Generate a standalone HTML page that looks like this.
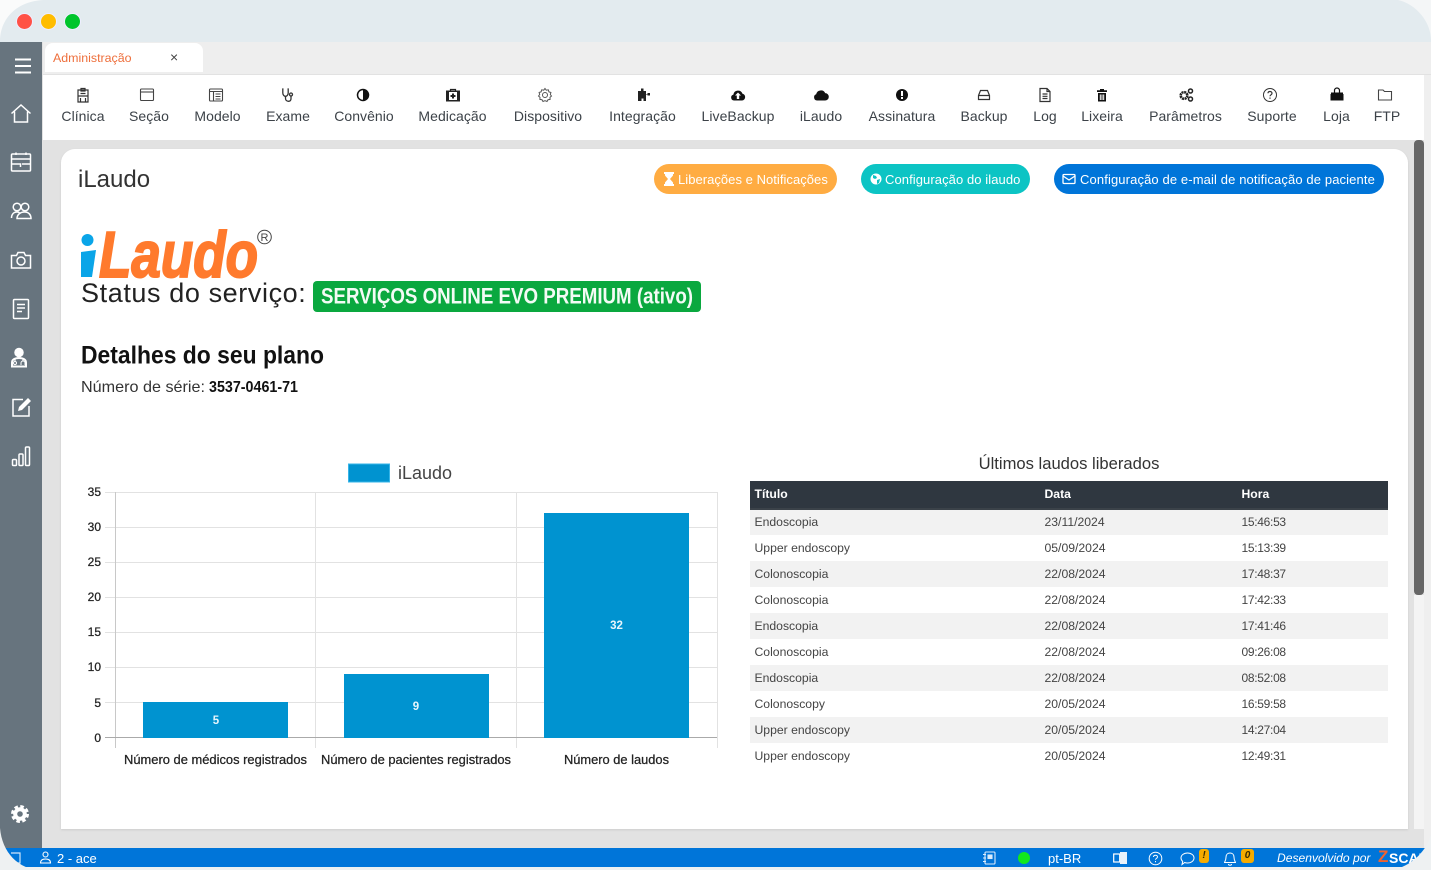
<!DOCTYPE html>
<html lang="pt-BR"><head><meta charset="utf-8"><title>iLaudo</title>
<style>
*{box-sizing:border-box}
html,body{margin:0;padding:0;width:1431px;height:870px;overflow:hidden;background:#eef1f2;font-family:"Liberation Sans",sans-serif}
.a{position:absolute}
.t{position:absolute;white-space:nowrap}
.tb{position:absolute;top:87px;width:100px;text-align:center;font-size:14px;color:#3c4248;letter-spacing:.05px}
.tb svg{display:block;margin:0 auto 3px;width:16px;height:16px}
.tb span{display:block;line-height:20px}
.side svg{position:absolute;left:10px;width:22px;height:22px;fill:none;stroke:#fff;stroke-width:1.5}
.btn{position:absolute;top:164px;height:30px;border-radius:15px;color:#fff;font-size:13px;line-height:31px;white-space:nowrap;padding-left:9px}
.btn svg{position:absolute;top:8px;width:14px;height:14px}
.btn span{position:absolute;top:0}
table{position:absolute;left:750px;top:481px;width:638px;border-collapse:collapse;font-size:12.2px;color:#444;table-layout:fixed}
th{height:28px;background:#2f3740;color:#fff;text-align:left;padding:0 0 2px 4.5px;font-size:12.2px;border-bottom:2px solid #3b4249}
td{height:26px;padding:0 0 1px 4.5px}
td:nth-child(3){font-size:12px;letter-spacing:-.3px}
tr:nth-child(odd) td{background:#f2f2f2}
</style></head><body>
<div class="a" style="left:0;top:0;width:1431px;height:42px;background:#e3ebef"></div>
<div class="a" style="left:17px;top:14px;width:15px;height:15px;border-radius:50%;background:#ff5146;box-shadow:0 0 0 1px #eef"></div>
<div class="a" style="left:41px;top:14px;width:15px;height:15px;border-radius:50%;background:#ffbd00;box-shadow:0 0 0 1px #eef"></div>
<div class="a" style="left:65px;top:14px;width:15px;height:15px;border-radius:50%;background:#00c52c;box-shadow:0 0 0 1px #eef"></div>

<div class="a" style="left:42px;top:42px;width:1389px;height:806px;background:#e2e2e2"></div>
<div class="a" style="left:43px;top:42px;width:1388px;height:32px;background:#eeeeee"></div>
<div class="a" style="left:45px;top:43px;width:158px;height:29px;background:#fff;border-radius:8px 8px 0 0"></div>
<div class="t" style="left:53px;top:50px;font-size:12.4px;color:#ee6f3c;line-height:16px">Administração</div>
<div class="t" style="left:170px;top:50px;font-size:14px;color:#444;line-height:15px">×</div>

<div class="a" style="left:43px;top:75px;width:1381px;height:65px;background:#fff"></div>
<div class="a" style="left:1424px;top:75px;width:7px;height:773px;background:#efefef"></div>

<div class="tb" style="left:33px"><svg viewBox="0 0 16 16" fill="none" stroke="#333" stroke-width="1.2"><path d="M3 3h10v12H3zM6 1.500h4V4H6zM3 9h10M5.500 11v4M10.500 11v4M5.500 6.500h5"/></svg><span>Clínica</span></div>
<div class="tb" style="left:97px"><svg viewBox="0 0 16 16" fill="none" stroke="#444" stroke-width="1.100"><rect x="1.500" y="2" width="13" height="11.500" rx="1"/><path d="M1.500 5h13"/></svg><span style="margin-left:4px">Seção</span></div>
<div class="tb" style="left:165.500px"><svg viewBox="0 0 16 16" fill="none" stroke="#444" stroke-width="1.100"><rect x="1.500" y="2" width="13" height="12" rx="1"/><path d="M1.500 4.500h13M5.500 4.500V14M7.500 7h5M7.500 9.500h5M7.500 12h5"/></svg><span style="margin-left:4px">Modelo</span></div>
<div class="tb" style="left:238px"><svg viewBox="0 0 16 16" fill="none" stroke="#333" stroke-width="1.300"><path d="M3.500 2H2.800v4c0 2 1.500 3.300 2.700 3.300S8.200 8 8.200 6V2h-.7M5.500 9.300v2c0 2 1.500 3 3 3s2.500-1 2.500-2.500V9"/><circle cx="11" cy="7.500" r="1.500"/></svg><span>Exame</span></div>
<div class="tb" style="left:313px"><svg viewBox="0 0 16 16"><circle cx="8" cy="8" r="5.500" fill="#fff" stroke="#111" stroke-width="1.500"/><path d="M8 2.500a5.500 5.500 0 0 1 0 11z" fill="#111"/></svg><span style="margin-left:2px">Convênio</span></div>
<div class="tb" style="left:402.500px"><svg viewBox="0 0 16 16"><path d="M1.500 4h13v10h-13z" fill="#222" stroke="#222"/><path d="M5.500 4V2.500h5V4" fill="none" stroke="#222" stroke-width="1.200"/><rect x="4" y="5" width="8" height="8" fill="#fff"/><path d="M7 6.500h2V8h1.500v2H9v1.500H7V10H5.500V8H7z" fill="#222"/></svg><span>Medicação</span></div>
<div class="tb" style="left:495px"><svg viewBox="0 0 16 16" fill="none" stroke="#555" stroke-width="1"><path d="M8 1.500l1.300 1.700 2-.4.600 2 2 .7-.6 2 1.200 1.500-1.500 1.300.1 2.100-2.100.3-1 1.800L8 13.700l-2 .8-1-1.800-2.100-.3.100-2.100L1.500 9l1.200-1.500-.6-2 2-.7.600-2 2 .4z"/><circle cx="8" cy="8" r="2.500"/></svg><span style="margin-left:6px">Dispositivo</span></div>
<div class="tb" style="left:592.500px"><svg viewBox="0 0 16 16" fill="#222"><path d="M6 1.500h2.500V4H11v3h1.500V6H15v2.500h-2.500v-1H11V14H8.500v-2.500H6.500V14H3V4h3z"/></svg><span>Integração</span></div>
<div class="tb" style="left:688px"><svg viewBox="0 0 16 16"><path d="M4 13.500a3 3 0 0 1-.6-5.900 4.700 4.700 0 0 1 9-1A3.500 3.500 0 0 1 12 13.500z" fill="#111"/><path d="M8 5.500l3 3H9.200V12H6.800V8.500H5z" fill="#fff"/></svg><span>LiveBackup</span></div>
<div class="tb" style="left:771px"><svg viewBox="0 0 16 16"><path d="M4 13.500a3.200 3.200 0 0 1-.8-6.200 4.800 4.800 0 0 1 9-1.200A3.700 3.700 0 0 1 12 13.500z" fill="#111"/></svg><span>iLaudo</span></div>
<div class="tb" style="left:852px"><svg viewBox="0 0 16 16"><circle cx="8" cy="8" r="6" fill="#111"/><rect x="7" y="4" width="2" height="5" fill="#fff"/><rect x="7" y="10" width="2" height="2" fill="#fff"/></svg><span>Assinatura</span></div>
<div class="tb" style="left:934px"><svg viewBox="0 0 16 16" fill="none" stroke="#333" stroke-width="1.200"><path d="M2.500 8.500L4.500 3.500h7l2 5v4h-11zM2.500 8.500h11"/></svg><span>Backup</span></div>
<div class="tb" style="left:995px"><svg viewBox="0 0 16 16" fill="none" stroke="#333" stroke-width="1.200"><path d="M3 1.500h7l3 3v10H3zM10 1.500v3h3M5.500 7h5M5.500 9.300h5M5.500 11.500h5"/></svg><span>Log</span></div>
<div class="tb" style="left:1052px"><svg viewBox="0 0 16 16"><path d="M6 2h4v1.300h3V5H3V3.300h3z" fill="#111"/><path d="M4 6h8v8.500H4z" fill="#111"/><path d="M6.300 7.500V13M8 7.500V13M9.700 7.500V13" stroke="#fff"/></svg><span>Lixeira</span></div>
<div class="tb" style="left:1135.500px"><svg viewBox="0 0 16 16"><circle cx="6" cy="8.500" r="3.300" fill="none" stroke="#222" stroke-width="2.600" stroke-dasharray="2 .6"/><circle cx="12.500" cy="4" r="2" fill="none" stroke="#222" stroke-width="1.500"/><circle cx="12.500" cy="12" r="2" fill="none" stroke="#222" stroke-width="1.500"/></svg><span>Parâmetros</span></div>
<div class="tb" style="left:1220px"><svg viewBox="0 0 16 16" fill="none" stroke="#333" stroke-width="1"><circle cx="8" cy="8" r="6.500"/><path d="M6 6.300C6 5 7 4.500 8 4.500s2 .6 2 1.800c0 1.500-2 1.500-2 3" stroke-width="1.200"/><path d="M8 10.500v1.300" stroke-width="1.200"/></svg><span style="margin-left:4px">Suporte</span></div>
<div class="tb" style="left:1286.500px"><svg viewBox="0 0 16 16"><path d="M5.500 6V3.500a2.500 2.500 0 0 1 5 0V6" fill="none" stroke="#111" stroke-width="1.200"/><path d="M1.500 7h13v6.500h-13z" fill="#111"/><path d="M2 5.500h12v2H2z" fill="#111"/></svg><span>Loja</span></div>
<div class="tb" style="left:1335px"><svg viewBox="0 0 16 16" fill="none" stroke="#444" stroke-width="1.100"><path d="M1.500 3h4.500l1.500 1.500h7V13h-13z"/></svg><span style="margin-left:4px">FTP</span></div>

<div class="a" style="left:61px;top:149px;width:1347px;height:680px;background:#fff;border-radius:14px 14px 0 0;box-shadow:0 1px 2px #ccc"></div>
<div class="a" style="left:1414px;top:140px;width:10px;height:455px;background:#666;border-radius:4px"></div>
<div class="a" style="left:1414px;top:595px;width:10px;height:234px;background:#f4f4f4"></div>

<div class="t" style="left:78px;top:166px;font-size:24px;line-height:28px;color:#333">iLaudo</div>

<div class="btn" style="left:654px;width:183px;background:#ffac42"><svg style="left:8px" viewBox="0 0 14 14" fill="#fff"><path d="M2 0h10v2h-1v1.500L8 7l3 3.500V12h1v2H2v-2h1v-1.500L6 7 3 3.500V2H2z"/></svg><span style="left:24px;letter-spacing:.04px">Liberações e Notificações</span></div>
<div class="btn" style="left:861px;width:169px;background:#0cc4c4"><svg style="left:8px" viewBox="0 0 14 14"><circle cx="7" cy="7" r="5.500" fill="#fff"/><path d="M4 3l3 1 1 2-2 1-2-1zM8 8l3-1-1 4-2 1z" fill="#0cc4c4"/></svg><span style="left:24px;letter-spacing:.08px">Configuração do ilaudo</span></div>
<div class="btn" style="left:1054px;width:330px;background:#0075d9"><svg style="left:8px" viewBox="0 0 14 14" fill="none" stroke="#fff" stroke-width="1.300"><rect x="1" y="2.500" width="12" height="9" rx="1"/><path d="M1 4l6 4 6-4"/></svg><span style="left:26px;letter-spacing:.12px">Configuração de e-mail de notificação de paciente</span></div>

<svg class="a" style="left:75px;top:222px" width="205" height="62" viewBox="0 0 205 62">
<circle cx="12.500" cy="18" r="6" fill="#0aa5e8"/>
<path d="M6 30l15-2-4 27H6z" fill="#0aa5e8"/>
<text x="24" y="55" font-family="'Liberation Sans',sans-serif" font-weight="700" font-style="italic" font-size="65" fill="#ff7a2d" stroke="#ff7a2d" stroke-width="2" textLength="159" lengthAdjust="spacingAndGlyphs">Laudo</text>
<circle cx="189.500" cy="15" r="6.800" fill="none" stroke="#444" stroke-width="1"/>
<text x="189.500" y="19" text-anchor="middle" font-family="'Liberation Sans',sans-serif" font-size="11" fill="#444">R</text>
</svg>

<div class="t" style="left:81px;top:277px;font-size:27px;line-height:32px;color:#222;letter-spacing:.6px">Status do serviço:</div>
<div class="a" style="left:313px;top:281px;width:388px;height:31px;background:#0aa83f;border-radius:4px"></div>
<svg class="a" style="left:313px;top:281px" width="388" height="31"><text x="8" y="22.500" font-family="'Liberation Sans',sans-serif" font-weight="700" font-size="22" fill="#f3fbf5" textLength="372" lengthAdjust="spacingAndGlyphs">SERVIÇOS ONLINE EVO PREMIUM (ativo)</text></svg>

<svg class="a" style="left:81px;top:340px" width="640" height="60">
<text x="0" y="23.500" font-family="'Liberation Sans',sans-serif" font-weight="700" font-size="25" fill="#111" textLength="243" lengthAdjust="spacingAndGlyphs">Detalhes do seu plano</text>
<text x="0" y="52" font-family="'Liberation Sans',sans-serif" font-size="16" fill="#333" textLength="124" lengthAdjust="spacingAndGlyphs">Número de série:</text>
<text x="128" y="52" font-family="'Liberation Sans',sans-serif" font-weight="700" font-size="16" fill="#111" textLength="89" lengthAdjust="spacingAndGlyphs">3537-0461-71</text>
</svg>

<svg class="a" style="left:75px;top:455px" width="660" height="325" viewBox="75 455 660 325" font-family="'Liberation Sans',sans-serif">
<rect x="348.500" y="464" width="41" height="18" fill="#0093d0" stroke="#36b4e8"/>
<text x="398" y="479" font-size="18" fill="#444" textLength="54" lengthAdjust="spacingAndGlyphs">iLaudo</text>
<g stroke="#e2e2e2" stroke-width="1">
<path d="M105 492.500H717M105 527.500H717M105 562.500H717M105 597.500H717M105 632.500H717M105 667.500H717M105 702.500H717"/>
<path d="M315.500 492V748M516.500 492V748M717.500 492V748"/>
</g>
<path d="M115.500 492V748" stroke="#c8c8c8"/>
<path d="M105 737.500H717" stroke="#aaa"/>
<rect x="143" y="702" width="145" height="36" fill="#0093d0"/>
<rect x="344" y="674" width="145" height="64" fill="#0093d0"/>
<rect x="544" y="513" width="145" height="225" fill="#0093d0"/>
<g font-size="11.500" font-weight="700" fill="#e8f6fc" text-anchor="middle">
<text x="216" y="724">5</text><text x="416" y="710">9</text><text x="616.500" y="629">32</text>
</g>
<g font-size="12" fill="#222" stroke="#222" stroke-width=".25" text-anchor="end">
<text x="101" y="496">35</text><text x="101" y="531">30</text><text x="101" y="566">25</text><text x="101" y="601">20</text><text x="101" y="636">15</text><text x="101" y="671">10</text><text x="101" y="707">5</text><text x="101" y="742">0</text>
</g>
<g font-size="13" fill="#222" stroke="#222" stroke-width=".25">
<text x="124" y="764" textLength="183" lengthAdjust="spacingAndGlyphs">Número de médicos registrados</text>
<text x="321" y="764" textLength="190" lengthAdjust="spacingAndGlyphs">Número de pacientes registrados</text>
<text x="564" y="764" textLength="105" lengthAdjust="spacingAndGlyphs">Número de laudos</text>
</g>
</svg>

<div class="t" style="left:750px;width:638px;text-align:center;top:454px;font-size:16.600px;line-height:19px;color:#333">Últimos laudos liberados</div>
<table><colgroup><col style="width:290px"><col style="width:197px"><col></colgroup>
<thead><tr><th>Título</th><th>Data</th><th>Hora</th></tr></thead>
<tbody>
<tr><td>Endoscopia</td><td>23/11/2024</td><td>15:46:53</td></tr>
<tr><td>Upper endoscopy</td><td>05/09/2024</td><td>15:13:39</td></tr>
<tr><td>Colonoscopia</td><td>22/08/2024</td><td>17:48:37</td></tr>
<tr><td>Colonoscopia</td><td>22/08/2024</td><td>17:42:33</td></tr>
<tr><td>Endoscopia</td><td>22/08/2024</td><td>17:41:46</td></tr>
<tr><td>Colonoscopia</td><td>22/08/2024</td><td>09:26:08</td></tr>
<tr><td>Endoscopia</td><td>22/08/2024</td><td>08:52:08</td></tr>
<tr><td>Colonoscopy</td><td>20/05/2024</td><td>16:59:58</td></tr>
<tr><td>Upper endoscopy</td><td>20/05/2024</td><td>14:27:04</td></tr>
<tr><td>Upper endoscopy</td><td>20/05/2024</td><td>12:49:31</td></tr>
</tbody></table>

<div class="a side" style="left:0;top:42px;width:42px;height:806px;background:#67747e">
<svg style="top:13px;left:12px" viewBox="0 0 22 22"><path d="M3 4.500h16M3 11h16M3 17.500h16" stroke-width="2"/></svg>
<svg style="top:60px" viewBox="0 0 22 22"><path d="M1.500 11.500L11 3l9.500 8.500M4.500 9.500V20h13V9.500"/></svg>
<svg style="top:109px" viewBox="0 0 22 22"><rect x="1.500" y="3" width="19" height="17" rx="1"/><path d="M1.500 8h19M6 1.500V4M16 1.500V4M1.500 13h9v3M12 13h8.500"/></svg>
<svg style="top:158px" viewBox="0 0 22 22"><circle cx="7" cy="7" r="3.800"/><circle cx="15" cy="7" r="3.800"/><path d="M1.500 18c0-3.500 2-6 5.500-6 1 0 2 .3 2.500.7M7 18.500c0-3.500 3-6.500 7.500-6.500s6.500 3 6.500 6.500z"/></svg>
<svg style="top:207px" viewBox="0 0 22 22"><path d="M1.500 6.500h5L8 3.500h6l1.500 3h5V19h-19z"/><circle cx="11" cy="12" r="4"/></svg>
<svg style="top:256px" viewBox="0 0 22 22"><rect x="3.500" y="1.500" width="15" height="19" rx="1"/><path d="M7 6.500h8M7 10h8M7 13.500h5"/></svg>
<svg style="top:305px;left:8px" viewBox="0 0 22 22"><circle cx="11" cy="5.500" r="4" fill="#fff"/><path d="M4 19.500v-4c0-3 3-4.500 7-4.500s7 1.500 7 4.500v4z" fill="none" stroke-width="2"/><path d="M7 11v3M15 11v3" stroke-width="1.200"/><circle cx="7" cy="16" r="1.500" stroke-width="1"/><path d="M13 18v-2a2 2 0 0 1 4 0v2" stroke-width="1"/></svg>
<svg style="top:354px" viewBox="0 0 22 22" stroke-width="1.800"><path d="M13 3.500H3V20h16V10"/><path d="M8 15l1-4L18 2l3 3-9 9z" fill="#fff" stroke="none"/></svg>
<svg style="top:403px" viewBox="0 0 22 22"><rect x="2.500" y="14.500" width="4" height="6" rx="1"/><rect x="9" y="9" width="4" height="11.500" rx="1"/><rect x="15.500" y="2" width="4" height="18.500" rx="1"/></svg>
<svg style="top:761px;left:8.500px" viewBox="0 0 22 22" stroke="none"><circle cx="11" cy="11" r="4.800" fill="none" stroke="#fff" stroke-width="4"/><circle cx="11" cy="11" r="7.500" fill="none" stroke="#fff" stroke-width="3" stroke-dasharray="3.500 2.400"/></svg>
</div>

<div class="a" style="left:0;top:848px;width:1431px;height:19px;background:#0075d9"></div>
<svg class="a" style="left:8px;top:851px" width="14" height="14" fill="none" stroke="#cfe5fa" stroke-width="1.200"><path d="M3 2h9v10H3"/></svg>
<svg class="a" style="left:39px;top:851px" width="13" height="13" viewBox="0 0 13 13" fill="none" stroke="#fff" stroke-width="1.100"><circle cx="6.500" cy="3.500" r="2.500"/><path d="M1.500 12c0-3 2-4 5-4s5 1 5 4z"/></svg>
<div class="t" style="left:57px;top:851px;font-size:13px;line-height:15px;color:#fff">2 - ace</div>
<svg class="a" style="left:983px;top:851px" width="13" height="14" viewBox="0 0 13 14" fill="none" stroke="#dcecfb" stroke-width="1.100"><rect x="2" y="1" width="10" height="12" rx="1"/><path d="M0 3.500h3M0 7h3M0 10.500h3"/><rect x="5" y="4" width="4" height="3.500" fill="#dcecfb"/></svg>
<div class="a" style="left:1018px;top:852px;width:12px;height:12px;border-radius:50%;background:#12e81c"></div>
<div class="t" style="left:1048px;top:851px;font-size:13px;line-height:15px;color:#fff">pt-BR</div>
<svg class="a" style="left:1113px;top:851px" width="14" height="14" viewBox="0 0 14 14"><rect x=".7" y="3" width="6" height="8" fill="none" stroke="#fff" stroke-width="1.200"/><rect x="7" y="1" width="7" height="12" fill="#e8f2fb"/></svg>
<svg class="a" style="left:1148px;top:851px" width="15" height="15" viewBox="0 0 15 15" fill="none" stroke="#fff"><circle cx="7.500" cy="7.500" r="6.300"/><path d="M5.500 6c0-1.300 1-1.800 2-1.800s2 .6 2 1.700c0 1.500-2 1.400-2 2.900M7.500 10v1.300"/></svg>
<svg class="a" style="left:1180px;top:852px" width="15" height="14" viewBox="0 0 15 14" fill="none" stroke="#fff"><path d="M7.500 1C11 1 14 3 14 6s-3 5-6.500 5c-1 0-2-.1-2.800-.5L2 12.500l.7-3C1.600 8.500 1 7.300 1 6c0-3 3-5 6.500-5z"/></svg>
<div class="a" style="left:1199px;top:849px;width:10px;height:14px;background:#f5ab00;border-radius:3px"></div>
<div class="t" style="left:1199px;width:10px;text-align:center;top:849px;font-size:10px;line-height:13px;font-weight:700;font-style:italic;color:#3a2c00">!</div>
<svg class="a" style="left:1223px;top:852px" width="14" height="14" viewBox="0 0 14 14" fill="none" stroke="#fff"><path d="M7 1c-2.500 0-4 1.800-4 4.200 0 3.300-1.500 4.800-1.500 5.300h11c0-.5-1.500-2-1.500-5.300C11 2.800 9.500 1 7 1zM5.500 12c0 .8.700 1.300 1.500 1.300s1.500-.5 1.500-1.300"/></svg>
<div class="a" style="left:1241px;top:849px;width:13px;height:14px;background:#f5ab00;border-radius:3px"></div>
<div class="t" style="left:1241px;width:13px;text-align:center;top:849px;font-size:10px;line-height:13px;font-weight:700;font-style:italic;color:#3a2c00">0</div>
<div class="t" style="left:1277px;top:851px;font-size:12.100px;line-height:15px;font-style:italic;color:#fff">Desenvolvido por</div>
<div class="t" style="left:1378px;top:848px;font-size:17px;line-height:17px;font-weight:700;color:#f0632f">Z</div>
<div class="t" style="left:1389px;top:850px;width:34px;overflow:hidden;font-size:14px;line-height:16px;font-weight:700;color:#fff">SCAN</div>

<svg class="a" style="left:0;top:0" width="1431" height="870" viewBox="0 0 1431 870">
<path d="M0 0H46C20 0 0 16 0 42z" fill="#fafbfb"/>
<path d="M1431 0H1398C1416 4 1431 22 1431 40z" fill="#f4f6f7"/>
<path d="M0 828C2 852 18 870 42 870H0z" fill="#eef1f2"/>
<path d="M1431 835C1426 852 1410 867 1392 870H1431z" fill="#eef1f2"/>
</svg>
</body></html>
